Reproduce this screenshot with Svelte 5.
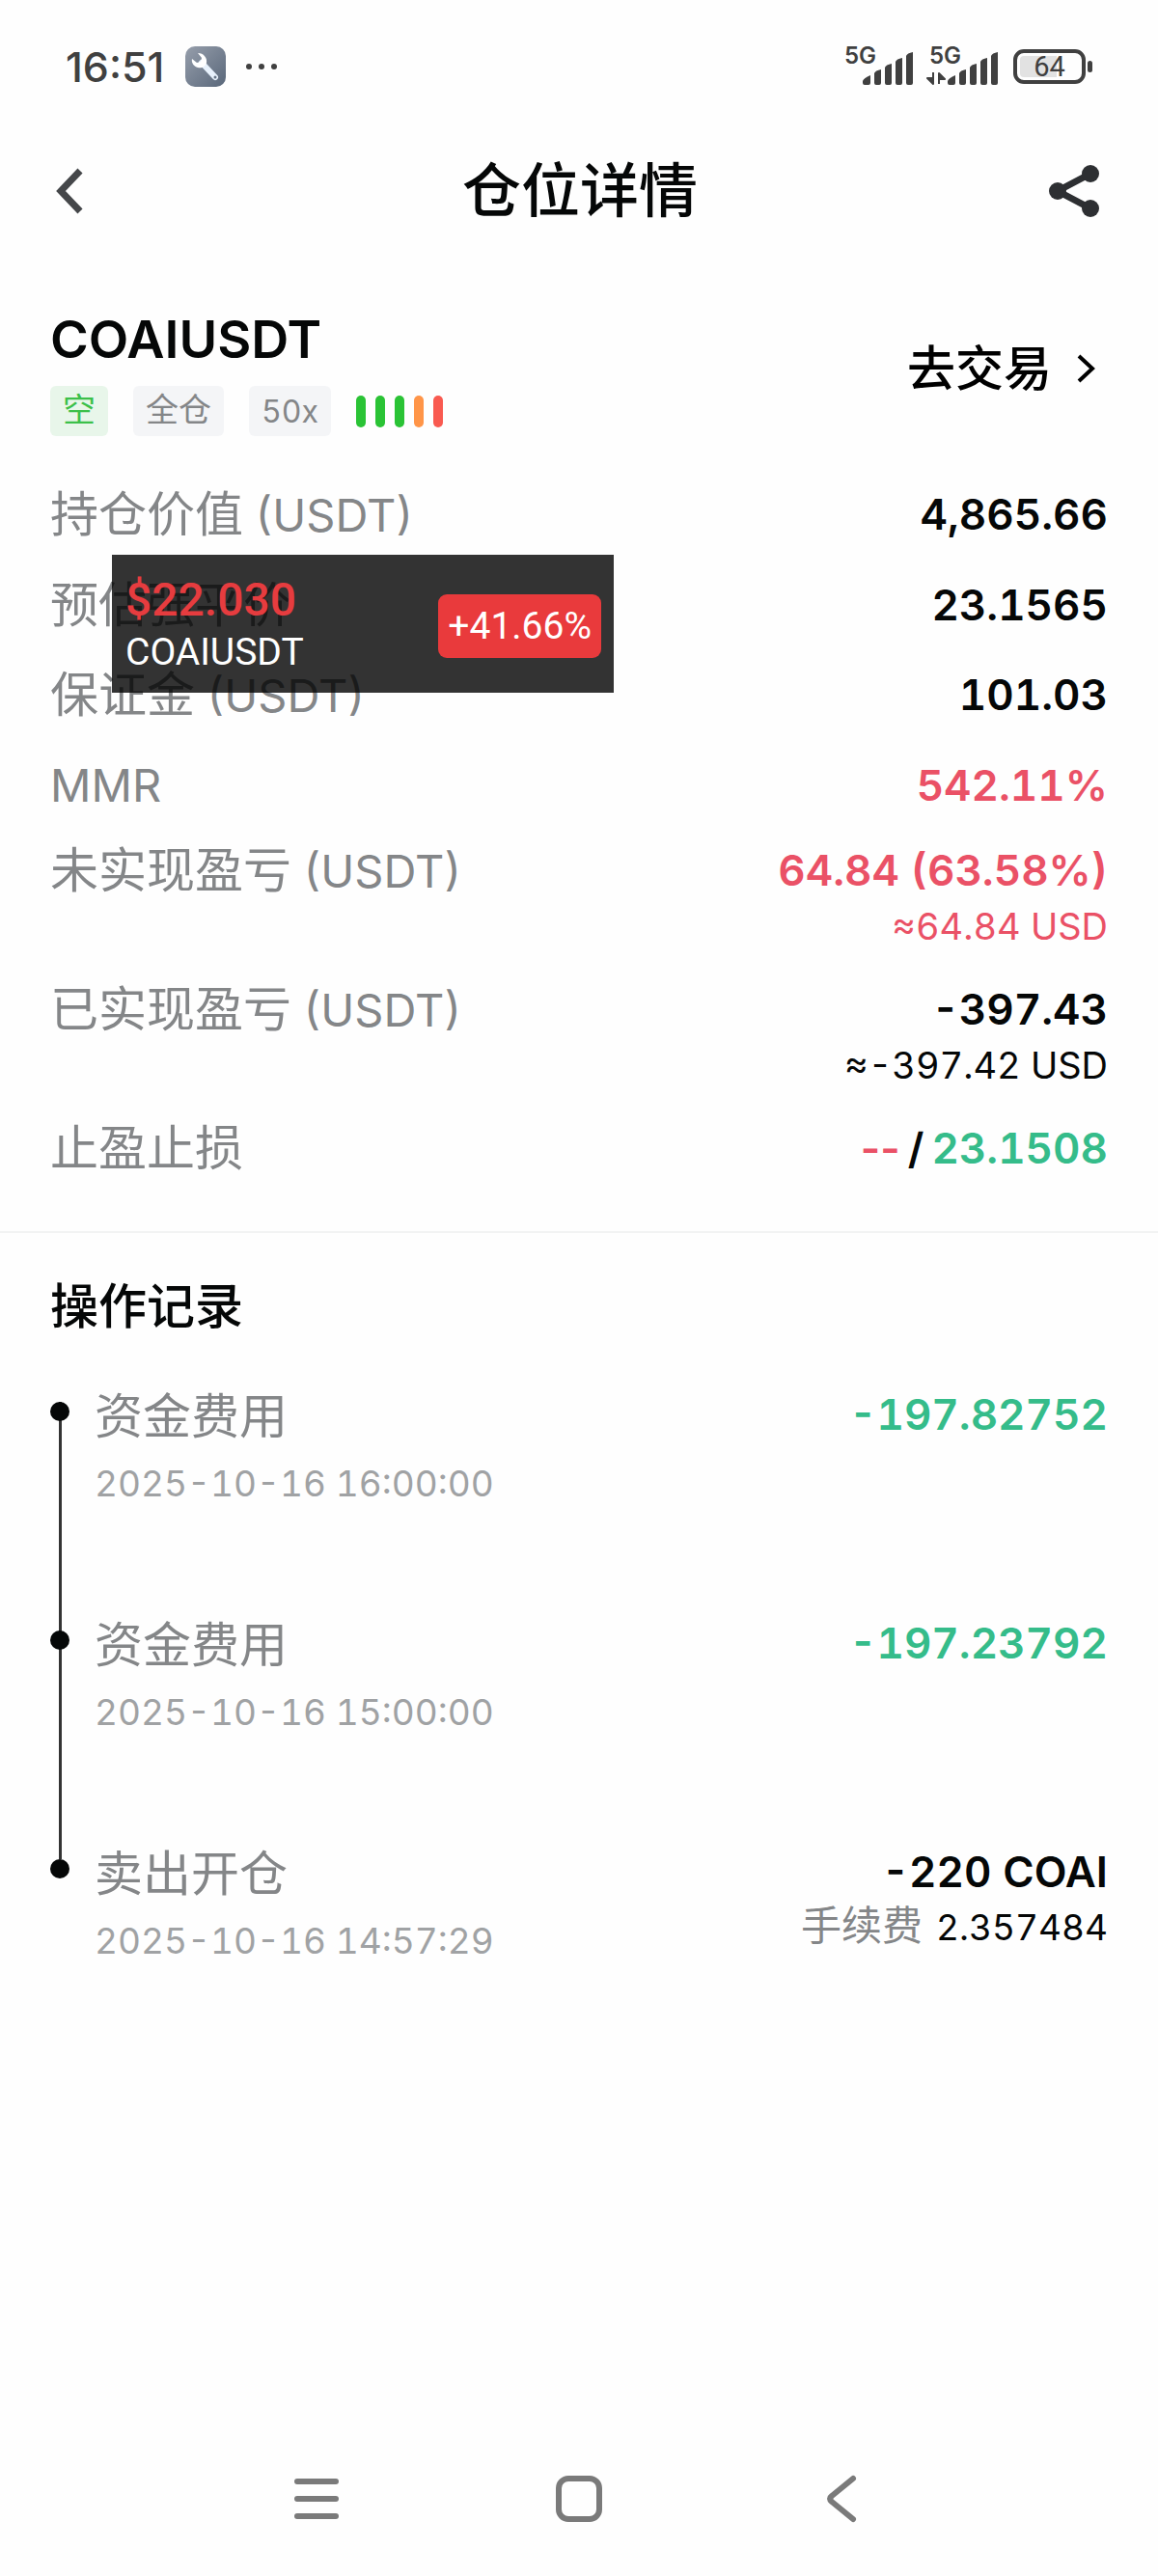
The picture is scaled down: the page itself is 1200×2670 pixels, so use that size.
<script>
	const levels = ['green', 'green', 'green', 'orange', 'red'];

	const rows = [
		{ label: '持仓价值', unit: '(USDT)', value: '4,865.66', loose: true },
		{ label: '预估强平价', value: '23.1565', loose: true },
		{ label: '保证金', unit: '(USDT)', value: '101.03', loose: true },
		{ unit: 'MMR', value: '542.11%', tone: 'loss' },
		{
			label: '未实现盈亏',
			unit: '(USDT)',
			value: '64.84 (63.58%)',
			sub: '≈64.84 USD',
			tone: 'loss'
		},
		{
			label: '已实现盈亏',
			unit: '(USDT)',
			value: '-397.43',
			sub: '≈-397.42 USD'
		}
	];

	const records = [
		{ type: '资金费用', time: '2025-10-16 16:00:00', value: '-197.82752', tone: 'gain' },
		{ type: '资金费用', time: '2025-10-16 15:00:00', value: '-197.23792', tone: 'gain' },
		{ type: '卖出开仓', time: '2025-10-16 14:57:29', value: '-220 COAI', fee: '2.357484' }
	];
</script>

{#snippet signal(active)}
	<div class="signal">
		<span>5G</span>
		<svg viewBox="0 0 74 40" width="74" height="40" aria-hidden="true">
			{#if active}
				<path
					d="M7 26v12M7 38l-6-6h6zM13 38V27M13 27l6 6h-6z"
					fill="#404040"
					stroke="#404040"
					stroke-width="2"
					stroke-linejoin="round"
				/>
			{/if}
			<path
				d="M22 35q1-3 8-6v8q0 2-2 2h-4q-2 0-2-2zM34 27q1-3 7-4v14q0 2-2 2h-3q-2 0-2-2zM45 21q1-3 7-4v20q0 2-2 2h-3q-2 0-2-2zM56 15q1-3 7-4v26q0 2-2 2h-3q-2 0-2-2zM67 9q1-3 7-4v32q0 2-2 2h-3q-2 0-2-2z"
				fill="#404040"
			/>
		</svg>
	</div>
{/snippet}

<div class="page">
	<div class="status">
		<span class="clock">16:51</span>
		<svg class="tool" viewBox="0 0 42 42" width="42" height="42" aria-hidden="true">
			<defs>
				<linearGradient id="tool-bg" x1="0" y1="0" x2="1" y2="1">
					<stop offset="0" stop-color="#969eab" />
					<stop offset="1" stop-color="#59677a" />
				</linearGradient>
			</defs>
			<rect width="42" height="42" rx="10" fill="url(#tool-bg)" />
			<path d="M17 17l14 15" stroke="#e7f1fc" stroke-width="6" stroke-linecap="round" />
			<path
				d="M13 7c6 0 10 5 9 10-1 4-5 6-9 5-4-1-7-5-6-9l5 4 4-1 1-4z"
				fill="#fff"
			/>
			<circle cx="31" cy="32" r="1.5" fill="#667487" />
		</svg>
		<svg class="dots" viewBox="0 0 34 8" width="34" height="8" aria-hidden="true">
			<circle cx="4" cy="4" r="3" />
			<circle cx="17" cy="4" r="3" />
			<circle cx="30" cy="4" r="3" />
		</svg>
		<div class="system">
			{@render signal(false)}
			{@render signal(true)}
			<div class="battery"><span>64</span></div>
		</div>
	</div>

	<header>
		<button class="icon back" aria-label="返回">
			<svg viewBox="0 0 34 48" width="34" height="48">
				<path d="M29 3L9 24l20 21" fill="none" stroke="#45474a" stroke-width="7" />
			</svg>
		</button>
		<h1>仓位详情</h1>
		<button class="icon share" aria-label="分享">
			<svg viewBox="0 0 54 56" width="54" height="56">
				<path d="M44 10L10 28l34 18" fill="none" stroke="#2d2f32" stroke-width="7" />
				<g fill="#2d2f32">
					<circle cx="10" cy="28" r="9" />
					<circle cx="44" cy="10" r="9" />
					<circle cx="44" cy="46" r="9" />
				</g>
			</svg>
		</button>
	</header>

	<main>
		<section class="position">
			<div class="summary">
				<div>
					<h2>COAIUSDT</h2>
					<div class="tags">
						<span class="tag short">空</span>
						<span class="tag">全仓</span>
						<span class="tag lever">50x</span>
						<div class="levels">
							{#each levels as level}
								<i class={level}></i>
							{/each}
						</div>
					</div>
				</div>
				<a class="trade" href="#trade">
					去交易
					<svg viewBox="0 0 20 32" width="20" height="32" aria-hidden="true">
						<path d="M2 3l14 13L2 29" fill="none" stroke="#000" stroke-width="4" />
					</svg>
				</a>
			</div>

			<dl>
				{#each rows as row}
					<div class="row" class:loose={row.loose}>
						<dt>
							{#if row.label}<span>{row.label}</span>{/if}
							{#if row.unit}<span class="unit">{row.unit}</span>{/if}
						</dt>
						<dd class={row.tone}>
							{row.value}
							{#if row.sub}<small>{row.sub}</small>{/if}
						</dd>
					</div>
				{/each}
				<div class="row">
					<dt>止盈止损</dt>
					<dd class="stops">
						<span class="loss dash">--</span>
						<span>/</span>
						<span class="gain">23.1508</span>
					</dd>
				</div>
			</dl>

			<div class="ticker">
				<div>
					<p class="price">$22.030</p>
					<p class="pair">COAIUSDT</p>
				</div>
				<span class="change">+41.66%</span>
			</div>
		</section>

		<section class="history">
			<h3>操作记录</h3>
			<ol>
				{#each records as record}
					<li>
						<div class="marker"></div>
						<div class="info">
							<p class="type">{record.type}</p>
							<time>{record.time}</time>
						</div>
						<div class="amount">
							<p class={record.tone}>{record.value}</p>
							{#if record.fee}
								<p class="fee"><span>手续费</span>{record.fee}</p>
							{/if}
						</div>
					</li>
				{/each}
			</ol>
		</section>
	</main>

	<nav>
		<button aria-label="最近任务">
			<svg viewBox="0 0 50 50" width="50" height="50">
				<path d="M5 7h40M5 25h40M5 43h40" />
			</svg>
		</button>
		<button aria-label="主屏幕">
			<svg viewBox="0 0 50 50" width="50" height="50">
				<rect x="4" y="4" width="42" height="42" rx="10" />
			</svg>
		</button>
		<button aria-label="返回上一页">
			<svg viewBox="0 0 50 50" width="50" height="50">
				<path d="M37 4L15 22q-4 3 0 6l22 18" />
			</svg>
		</button>
	</nav>
</div>

<style>
	:global(body) {
		margin: 0;
		background: #fefefe;
	}

	.page {
		min-height: 100vh;
		display: flex;
		flex-direction: column;
		font-family: Inter, 'Noto Sans CJK SC', sans-serif;
		font-variant-numeric: tabular-nums;
		color: #050707;
	}
	h1,
	h2,
	h3,
	p,
	dl,
	dd,
	ol {
		margin: 0;
		padding: 0;
	}
	svg {
		display: block;
	}
	button {
		border: 0;
		padding: 0;
		background: none;
	}

	.status {
		display: flex;
		align-items: center;
		height: 138px;
		padding: 0 68px;
		color: #404040;
		font-variant-numeric: normal;
	}
	.clock {
		font-size: 43px;
		font-weight: 500;
	}
	.tool {
		margin-left: 22px;
	}
	.dots {
		margin-left: 20px;
		fill: #404040;
	}
	.system {
		display: flex;
		align-items: center;
		gap: 14px;
		margin-left: auto;
	}
	.signal {
		position: relative;
	}
	.signal span {
		position: absolute;
		top: -1px;
		left: 3px;
		font-size: 24px;
		line-height: 20px;
		font-weight: 600;
	}
	.battery {
		position: relative;
		box-sizing: border-box;
		width: 75px;
		height: 36px;
		margin-left: 2px;
		margin-right: 7px;
		border: 4px solid #404040;
		border-radius: 11px;
		padding: 3px;
		background: linear-gradient(90deg, #e2e2e2 62%, transparent 62%) content-box;
		text-align: center;
	}
	.battery span {
		display: block;
		font-family: Roboto, sans-serif;
		font-size: 29px;
		line-height: 23px;
	}
	.battery::after {
		content: '';
		position: absolute;
		top: 8px;
		right: -11px;
		width: 5px;
		height: 12px;
		border-radius: 3px;
		background: #404040;
	}

	header {
		display: flex;
		align-items: center;
		justify-content: space-between;
		height: 120px;
		padding: 0 60px 0 54px;
	}
	.icon {
		display: flex;
		width: 60px;
	}
	.back {
		width: 68px;
	}
	.share {
		justify-content: flex-end;
	}
	h1 {
		font-size: 61px;
		line-height: 72px;
		font-weight: 500;
	}

	.position {
		position: relative;
		padding: 62px 52px 56px;
		border-bottom: 2px solid #f2f3f3;
	}
	.summary {
		display: flex;
		align-items: flex-start;
		justify-content: space-between;
		margin-bottom: 51px;
	}
	h2 {
		font-size: 54px;
		line-height: 64px;
		font-weight: 600;
	}
	.tags {
		display: flex;
		align-items: center;
		gap: 26px;
		margin-top: 16px;
	}
	.tag {
		height: 52px;
		padding: 0 13px;
		border-radius: 6px;
		background: #f4f5f7;
		color: #848688;
		font-size: 34px;
		line-height: 50px;
	}
	.tag.short {
		background: #e8f6ea;
		color: #3cc04a;
	}
	.tag.lever {
		font-size: 32px;
		line-height: 54px;
	}
	.levels {
		display: flex;
		gap: 10px;
	}
	.levels i {
		width: 10px;
		height: 33px;
		border-radius: 5px;
	}
	.green {
		background: #2ac335;
	}
	.orange {
		background: #ff9548;
	}
	.red {
		background: #f95a50;
	}
	.trade {
		display: flex;
		align-items: center;
		gap: 26px;
		margin: 32px 12px 0 0;
		color: #000;
		font-size: 50px;
		line-height: 60px;
		font-weight: 500;
		text-decoration: none;
	}

	dl {
		display: grid;
		gap: 28px;
	}
	.row {
		display: flex;
		justify-content: space-between;
	}
	.row.loose {
		padding-bottom: 5px;
	}
	dt {
		display: flex;
		align-items: baseline;
		gap: 12px;
		color: #848688;
		font-size: 50px;
		line-height: 60px;
	}
	.unit {
		font-size: 47px;
	}
	dd {
		font-size: 44px;
		line-height: 60px;
		font-weight: 600;
		text-align: right;
	}
	dd small {
		display: block;
		font-size: 38px;
		line-height: 56px;
		font-weight: 400;
	}
	.stops {
		display: flex;
		gap: 8px;
	}
	.dash {
		font-variant-numeric: normal;
	}
	.loss {
		color: #ea5166;
	}
	.gain {
		color: #35bc8a;
	}

	.ticker {
		position: absolute;
		top: 317px;
		left: 116px;
		box-sizing: border-box;
		display: flex;
		align-items: center;
		justify-content: space-between;
		width: 520px;
		height: 143px;
		padding: 4px 13px 0 14px;
		background: rgba(0, 0, 0, 0.8);
		color: #fff;
		font-family: Roboto, sans-serif;
		font-variant-numeric: normal;
	}
	.price {
		color: #e63c3f;
		font-size: 48px;
		line-height: 54px;
		font-weight: 500;
	}
	.pair {
		font-size: 39px;
		line-height: 54px;
	}
	.change {
		padding: 0 10px;
		border-radius: 9px;
		background: #e93a3c;
		font-size: 39px;
		line-height: 66px;
	}

	.history {
		padding: 46px 52px 0;
	}
	h3 {
		font-size: 50px;
		line-height: 60px;
		font-weight: 500;
	}
	ol {
		margin-top: 58px;
		list-style: none;
	}
	li {
		display: flex;
		min-height: 237px;
	}
	.marker {
		width: 20px;
		margin: 11px 26px -11px 0;
		background: linear-gradient(#333, #333) center / 3px 100% no-repeat;
	}
	li:last-child .marker {
		background: none;
	}
	.marker::before {
		content: '';
		display: block;
		height: 20px;
		border-radius: 50%;
		background: #050707;
	}
	.type {
		color: #848688;
		font-size: 50px;
		line-height: 52px;
	}
	time {
		display: block;
		margin-top: 20px;
		color: #a0a2a4;
		font-size: 37px;
		line-height: 48px;
	}
	.amount {
		margin-left: auto;
		font-size: 44px;
		line-height: 48px;
		font-weight: 600;
		text-align: right;
	}
	.amount .fee {
		font-size: 37px;
		line-height: 64px;
		font-weight: 400;
	}
	.fee span {
		margin-right: 14px;
		color: #848688;
		font-size: 42px;
	}

	nav {
		display: grid;
		grid-template-columns: repeat(3, 1fr);
		justify-items: center;
		margin-top: auto;
		padding: 0 16% 55px;
	}
	nav svg {
		fill: none;
		stroke: #7a7a7a;
		stroke-width: 6;
		stroke-linecap: round;
	}
</style>
